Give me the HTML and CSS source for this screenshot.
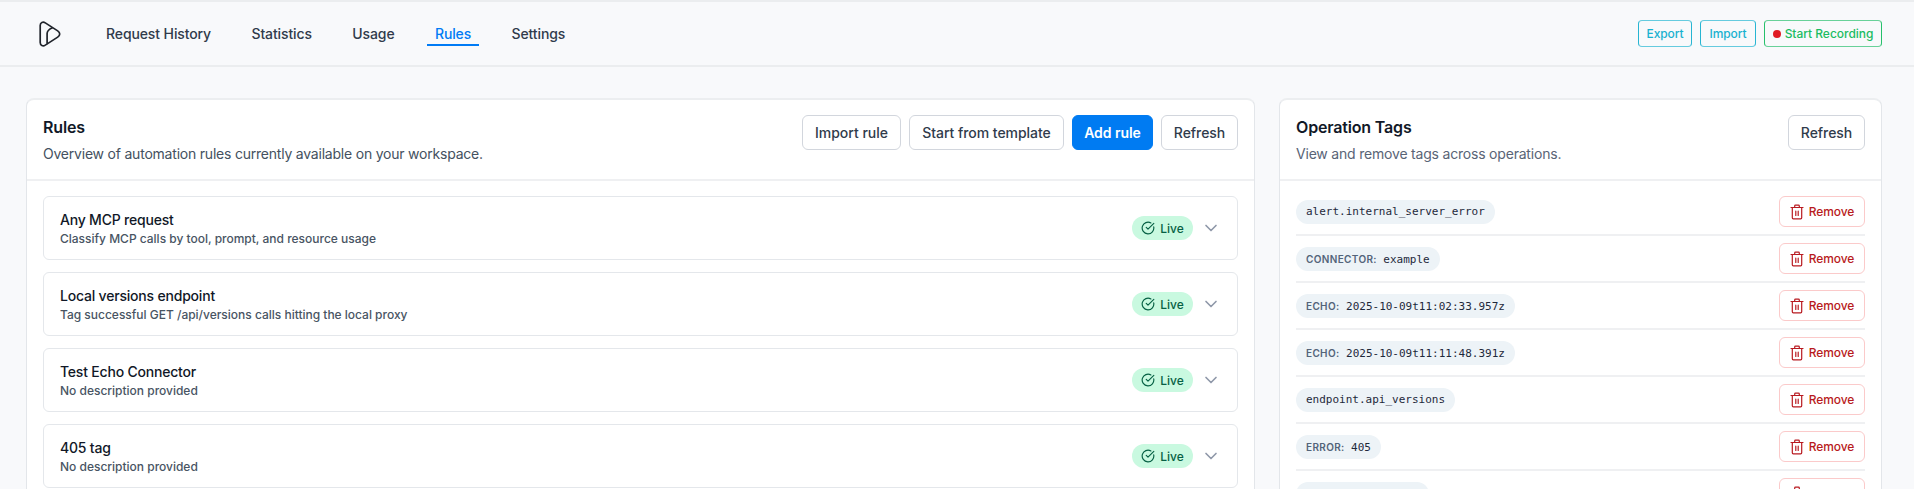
FILE: index.html
```
<!DOCTYPE html>
<html lang="en">
<head>
<meta charset="utf-8">
<title>Rules</title>
<link rel="stylesheet" href="styles.css">
</head>
<body>
<svg class="defs" width="0" height="0">
  <symbol id="check" viewBox="0 0 24 24"><path d="M21.8 10A10 10 0 1 1 17 3.34M9 11l3 3L22 4"/></symbol>
  <symbol id="chevron" viewBox="0 0 24 24"><path d="M6 9l6 6 6-6"/></symbol>
  <symbol id="trash" viewBox="0 0 14 16"><path d="M1 3.500H13M2.300 3.500V13.800Q2.300 14.800 3.300 14.800H10.700Q11.700 14.800 11.700 13.800V3.500M4.700 3.500V2Q4.700 1.200 5.500 1.200H8.500Q9.300 1.200 9.300 2V3.500M5.800 7.200V11.500M8.200 7.200V11.500"/></symbol>
</svg>
<header class="topbar">
  <svg class="logo" viewBox="0 0 22 26"><path d="M1.200 4.500C1.200 1.500 4 .4 6.300 1.900L18.700 9.900C21.400 11.700 21.400 14.300 18.700 16.100L6.300 24.100C4 25.600 1.200 24.500 1.200 21.500ZM8.100 23V12.500C8.100 9.500 9.800 8.300 13.500 6.700"/></svg>
  <nav class="nav">
    <a>Request History</a><a>Statistics</a><a>Usage</a><a class="active">Rules</a><a>Settings</a>
  </nav>
  <div class="actions">
    <button class="mini export">Export</button><button class="mini import">Import</button><button class="mini record"><i class="dot"></i>Start Recording</button>
  </div>
</header>
<main class="layout">
  <section class="card">
    <div class="card-head">
      <div><h2>Rules</h2><p>Overview of automation rules currently available on your workspace.</p></div>
      <div class="buttons"><button class="btn w-import">Import rule</button><button class="btn w-start">Start from template</button><button class="btn w-add primary">Add rule</button><button class="btn">Refresh</button></div>
    </div>
    <div class="rules">
      <article class="rule"><div><h3>Any MCP request</h3><p>Classify MCP calls by tool, prompt, and resource usage</p></div><span class="live"><svg><use href="#check"/></svg>Live</span><svg class="chev"><use href="#chevron"/></svg></article>
      <article class="rule"><div><h3>Local versions endpoint</h3><p>Tag successful GET /api/versions calls hitting the local proxy</p></div><span class="live"><svg><use href="#check"/></svg>Live</span><svg class="chev"><use href="#chevron"/></svg></article>
      <article class="rule"><div><h3>Test Echo Connector</h3><p>No description provided</p></div><span class="live"><svg><use href="#check"/></svg>Live</span><svg class="chev"><use href="#chevron"/></svg></article>
      <article class="rule"><div><h3>405 tag</h3><p>No description provided</p></div><span class="live"><svg><use href="#check"/></svg>Live</span><svg class="chev"><use href="#chevron"/></svg></article>
    </div>
  </section>
  <section class="card">
    <div class="card-head">
      <div><h2>Operation Tags</h2><p class="muted">View and remove tags across operations.</p></div>
      <button class="btn">Refresh</button>
    </div>
    <div class="tags">
      <div class="tag-row"><span class="tag">alert.internal_server_error</span><button class="remove"><svg><use href="#trash"/></svg>Remove</button></div>
      <div class="tag-row"><span class="tag"><b>CONNECTOR:</b>example</span><button class="remove"><svg><use href="#trash"/></svg>Remove</button></div>
      <div class="tag-row"><span class="tag"><b>ECHO:</b>2025-10-09t11:02:33.957z</span><button class="remove"><svg><use href="#trash"/></svg>Remove</button></div>
      <div class="tag-row"><span class="tag"><b>ECHO:</b>2025-10-09t11:11:48.391z</span><button class="remove"><svg><use href="#trash"/></svg>Remove</button></div>
      <div class="tag-row"><span class="tag">endpoint.api_versions</span><button class="remove"><svg><use href="#trash"/></svg>Remove</button></div>
      <div class="tag-row"><span class="tag"><b>ERROR:</b>405</span><button class="remove"><svg><use href="#trash"/></svg>Remove</button></div>
      <div class="tag-row"><span class="tag">server_time_usage</span><button class="remove"><svg><use href="#trash"/></svg>Remove</button></div>
    </div>
  </section>
</main>
</body>
</html>
```
FILE: styles.css
```
* { box-sizing: border-box; }
html { height: 100%; overflow: hidden; }
body { margin: 0; height: 489px; overflow: hidden; background: #f8f9fb; color: #303b4b; font-family: Inter, "Liberation Sans", sans-serif; }
h2, h3, p { margin: 0; }
button { font-family: inherit; margin: 0; }
.defs { position: absolute; }
svg { fill: none; stroke: currentColor; stroke-width: 2; stroke-linecap: round; stroke-linejoin: round; flex: none; }

.topbar { height: 67px; border-top: 2px solid #ebedef; border-bottom: 2px solid #ebedef; padding: 0 32px 0 39px; display: flex; align-items: center; }
.logo { width: 22px; height: 26px; color: #20242b; stroke-width: 1.7; margin-top: 1px; }
.nav { display: flex; gap: 24.4px; margin-left: 37px; }
.nav a { padding: 1px 8px 0; height: 25px; line-height: 23px; font-size: 14px; font-weight: 550; letter-spacing: -.11px; border-bottom: 2px solid transparent; margin-top: 0; }
.nav a.active { color: #007bf5; border-color: #007bf5; }
.actions { margin-left: auto; display: flex; gap: 8px; }
.mini { height: 27px; padding: 0; border: 1px solid #27b5d2; border-top-color: #65cbdf; border-bottom-color: #65cbdf; border-radius: 4px; background: none; color: #18b1d0; font-size: 12px; font-weight: 550; letter-spacing: -.08px; display: flex; align-items: center; justify-content: center; }
.export { width: 54px; }
.import { width: 56px; }
.record { width: 118px; letter-spacing: -.03px; color: #1bbc62; border-color: #68d199 #26c06b; }
.dot { width: 8px; height: 8px; border-radius: 50%; background: #e01b24; margin-right: 4px; }

.layout { display: grid; grid-template-columns: 1229px 603px; gap: 24px; height: 422px; padding: 31px 0 0 26px; overflow: hidden; }
.card { height: 391px; overflow: hidden; background: #fff; border: 1px solid #e3e6ea; border-top: 2px solid #eceef0; border-bottom: 0; border-radius: 8px 8px 0 0; }
.card-head { height: 81px; padding: 15px 16px 0; border-bottom: 2px solid #eff0f2; display: flex; justify-content: space-between; align-items: flex-start; }
h2 { font-size: 16px; line-height: 24px; font-weight: 600; letter-spacing: -.17px; color: #111827; }
.card-head p { font-size: 14px; line-height: 20px; margin-top: 5px; letter-spacing: -.215px; color: #445160; }
.card-head .muted { color: #596476; letter-spacing: -.2px; }
.buttons { display: flex; gap: 8px; }
.btn { width: 77px; height: 35px; padding: 0; font-size: 14px; font-weight: 550; letter-spacing: -.05px; color: #303b4b; background: #fff; border: 1px solid #d2d6dd; border-radius: 6px; white-space: nowrap; }
.w-import { width: 99px; letter-spacing: 0; }
.w-start { width: 155px; }
.w-add { width: 81px; }
.btn.primary { background: #007bf2; border-color: #007bf2; color: #fff; font-weight: 600; }

.rules { padding: 15px 16px 0; display: grid; gap: 12px; }
.rule { height: 64px; border: 1px solid #e4e7eb; border-radius: 6px; padding: 0 16px; display: flex; align-items: center; }
.rule div { flex: 1; padding-top: 1px; }
h3 { font-size: 14px; line-height: 20px; font-weight: 550; letter-spacing: -.2px; color: #111827; }
.rule p { font-size: 12px; line-height: 16px; margin-top: 1px; font-weight: 550; letter-spacing: -.01px; color: #485463; }
.live { height: 24px; width: 61px; border-radius: 12px; background: #c9f9e0; color: #066044; font-size: 12px; font-weight: 550; letter-spacing: -.05px; display: flex; align-items: center; justify-content: center; gap: 5px; }
.live svg { width: 14px; height: 14px; }
.chev { width: 20px; height: 20px; color: #8f98a9; margin-left: 8px; }

.tags { padding: 8px 16px 0; }
.tag-row { height: 47px; display: flex; align-items: center; justify-content: space-between; border-bottom: 2px solid #eff0f2; }
.tag { height: 24px; padding: 0 10px; border-radius: 12px; background: #edf3f7; color: #1e293b; font: 11px/24px "DejaVu Sans Mono", monospace; }
.tag b { font: 600 10px/24px Inter, sans-serif; letter-spacing: .35px; color: #53647a; margin-right: 6.5px; }
.remove { width: 86px; height: 31px; border: 1px solid #fbcaca; border-radius: 6px; background: #fff; color: #b81a20; font-size: 12px; font-weight: 550; letter-spacing: -.06px; padding: 0; display: flex; align-items: center; justify-content: center; gap: 5px; }
.remove svg { width: 14px; height: 16px; stroke-width: 1.2; }
```
